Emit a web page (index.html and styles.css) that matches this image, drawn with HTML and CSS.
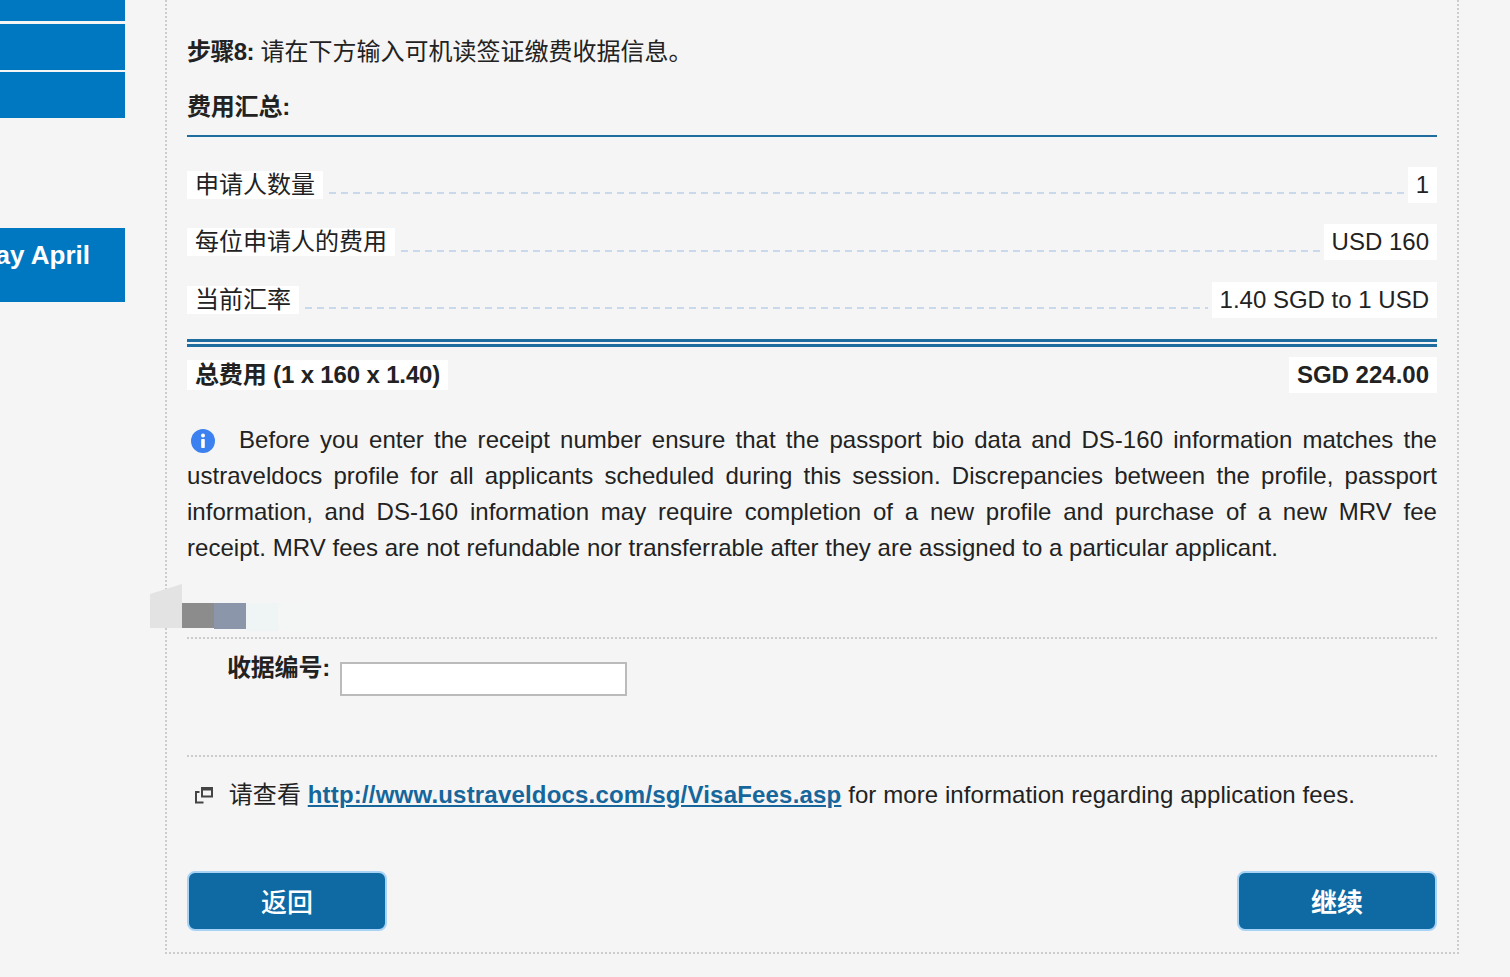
FILE: index.html
```html
<!DOCTYPE html>
<html lang="zh">
<head>
    <meta charset="UTF-8">
    <meta name="viewport" content="width=device-width, initial-scale=1.0">
    <title>Visa Fee Receipt</title>
    <link rel="stylesheet" href="styles.css">
</head>
<body>
    <div class="page">
        <aside class="sidebar">
            <div class="side-item side-item-first"></div>
            <div class="side-item"></div>
            <div class="side-item"></div>
            <div class="side-notice"><span>ay April</span></div>
        </aside>

        <main class="panel">
            <p class="step"><b>步骤8:</b> 请在下方输入可机读签证缴费收据信息。</p>
            <h2 class="summary-title">费用汇总:</h2>

            <div class="fee-list">
                <div class="fee-row">
                    <span class="fee-label">申请人数量</span>
                    <span class="fee-leader"></span>
                    <span class="fee-value">1</span>
                </div>
                <div class="fee-row">
                    <span class="fee-label">每位申请人的费用</span>
                    <span class="fee-leader"></span>
                    <span class="fee-value">USD 160</span>
                </div>
                <div class="fee-row">
                    <span class="fee-label">当前汇率</span>
                    <span class="fee-leader"></span>
                    <span class="fee-value">1.40 SGD to 1 USD</span>
                </div>
            </div>

            <div class="fee-row fee-total">
                <span class="fee-label">总费用 (1 x 160 x 1.40)</span>
                <span class="fee-value">SGD 224.00</span>
            </div>

            <p class="notice">
                <svg class="info-icon" viewBox="0 0 26 26" width="26" height="26" aria-hidden="true">
                    <circle cx="13" cy="13" r="12" fill="#3b82f0"/>
                    <circle cx="13" cy="7.5" r="2" fill="#fff"/>
                    <rect x="11.2" y="11" width="3.6" height="9" rx="0.8" fill="#fff"/>
                </svg>Before you enter the receipt number ensure that the passport bio data and DS-160 information matches the ustraveldocs profile for all applicants scheduled during this session. Discrepancies between the profile, passport information, and DS-160 information may require completion of a new profile and purchase of a new MRV fee receipt. MRV fees are not refundable nor transferrable after they are assigned to a particular applicant.
            </p>

            <div class="receipt-form">
                <label class="receipt-label" for="receipt">收据编号:</label>
                <input class="receipt-input" id="receipt" type="text">
            </div>

            <p class="more-info">
                <svg class="window-icon" viewBox="0 0 18 17" width="18" height="17" aria-hidden="true">
                    <path d="M7 1.5h10v8h-10z" fill="none" stroke="#444" stroke-width="2"/>
                    <path d="M6 0h12v3.5h-12z" fill="#444"/>
                    <path d="M4.5 5h-3.5v10.5h7.5" fill="none" stroke="#444" stroke-width="2"/>
                </svg>
                请查看 <a href="#">http://www.ustraveldocs.com/sg/VisaFees.asp</a> for more information regarding application fees.
            </p>

            <div class="actions">
                <button class="btn" type="button">返回</button>
                <button class="btn btn-next" type="button">继续</button>
            </div>
        </main>
    </div>

    <!-- blurred out text -->
    <div class="smudge">
        <div class="smudge-a"></div>
        <div class="smudge-b"></div>
        <div class="smudge-c"></div>
        <div class="smudge-d"></div>
        <div class="smudge-e"></div>
    </div>
</body>
</html>
```

FILE: styles.css
```css
html, body {
    margin: 0;
    padding: 0;
}

body {
    background-color: #f5f5f5;
    color: #222;
    font-family: "Liberation Sans", "Noto Sans CJK SC", sans-serif;
    font-size: 24px;
    line-height: 36px;
    height: 977px;
    overflow: hidden;
    position: relative;
}

.page {
    display: flex;
    align-items: flex-start;
    gap: 40px;
}

/* left menu */
.sidebar {
    width: 125px;
    flex-shrink: 0;
}

.side-item {
    background-color: #0078c1;
    height: 46px;
    margin-top: 2px;
}

.side-item-first {
    height: 21px;
    margin-top: 0;
    margin-bottom: 3px;
}

.side-notice {
    background-color: #0078c1;
    color: #fff;
    font-size: 26px;
    font-weight: bold;
    height: 74px;
    margin-top: 110px;
    padding: 9px 35px 0 0;
    box-sizing: border-box;
    display: flex;
    justify-content: flex-end;
    overflow: hidden;
    white-space: nowrap;
}

/* main panel */
.panel {
    width: 1294px;
    box-sizing: border-box;
    border: 2px dotted #ccc;
    border-top: none;
    padding: 34px 20px 21px;
}

.step {
    margin: 0;
}

.step b {
    letter-spacing: -0.6px;
}

.summary-title {
    margin: 19px 0 0;
    padding-bottom: 10px;
    border-bottom: 2px solid #1f6d9e;
    font-size: 24px;
    line-height: 36px;
    letter-spacing: -0.2px;
}

.fee-list {
    display: flex;
    flex-direction: column;
    gap: 21.4px;
    margin-top: 30px;
}

.fee-row {
    display: flex;
    align-items: center;
    height: 36px;
}

.fee-label {
    background-color: #fff;
    line-height: 28px;
    padding: 0 8px;
    margin-right: 6px;
}

.fee-leader {
    flex: 1;
    height: 2px;
    margin-top: 16.5px;
    background-image: repeating-linear-gradient(to right, #c9d8ea 0, #c9d8ea 7px, transparent 7px, transparent 12px);
}

.fee-value {
    background-color: #fff;
    padding: 0 8px;
    margin-left: 4px;
}

.fee-total {
    justify-content: space-between;
    font-weight: bold;
    border-top: 8px double #1f6d9e;
    margin-top: 21px;
    padding-top: 10px;
    box-sizing: content-box;
}

.fee-total .fee-label {
    line-height: 30px;
    letter-spacing: -0.15px;
}

.notice {
    margin: 29px 0 0;
    text-align: justify;
    letter-spacing: 0.04px;
}

.info-icon {
    vertical-align: -6px;
    margin: 0 23px 0 3px;
}

.receipt-form {
    margin-top: 71px;
    height: 120px;
    box-sizing: border-box;
    border-top: 2px dotted #ccc;
    border-bottom: 2px dotted #ccc;
    padding: 23px 0 0 40px;
    display: flex;
    align-items: flex-start;
}

.receipt-label {
    font-weight: bold;
    line-height: 12px;
    margin-right: 10px;
    letter-spacing: -0.2px;
}

.receipt-input {
    width: 287px;
    height: 34px;
    box-sizing: border-box;
    border: 2px solid #bbb;
    background-color: #fff;
    padding: 0;
    margin: 0;
}

.more-info {
    margin: 20px 0 0;
    padding-left: 8px;
    letter-spacing: 0.08px;
}

.window-icon {
    vertical-align: -1px;
    margin-right: 9px;
}

.more-info a {
    color: #16669b;
    font-weight: bold;
    letter-spacing: 0.19px;
}

.actions {
    display: flex;
    justify-content: space-between;
    margin-top: 58px;
}

.btn {
    width: 200px;
    height: 60px;
    background-color: #0f69a3;
    color: #fff;
    border: 2px solid #a9d3f5;
    border-radius: 8px;
    font-family: "Liberation Sans", "Noto Sans CJK SC", sans-serif;
    font-size: 26px;
    font-weight: 500;
    padding: 0;
}

.btn-next {
    font-weight: bold;
}

/* smudge sits over the panel border */
.smudge {
    position: absolute;
    left: 150px;
    top: 584px;
    width: 160px;
    height: 48px;
}

.smudge div {
    position: absolute;
}

.smudge-a {
    left: 0;
    top: 0;
    width: 32px;
    height: 44px;
    background-color: #e3e3e3;
    clip-path: polygon(0 10px, 100% 0, 100% 100%, 0 100%);
}

.smudge-b {
    left: 32px;
    top: 19px;
    width: 32px;
    height: 25px;
    background-color: #8c8c8c;
}

.smudge-c {
    left: 64px;
    top: 19px;
    width: 32px;
    height: 26px;
    background-color: #8c96ab;
}

.smudge-d {
    left: 96px;
    top: 19px;
    width: 32px;
    height: 28px;
    background-color: #eff5f5;
}

.smudge-e {
    left: 128px;
    top: 19px;
    width: 32px;
    height: 28px;
    background-color: #f4f6f5;
}
```
